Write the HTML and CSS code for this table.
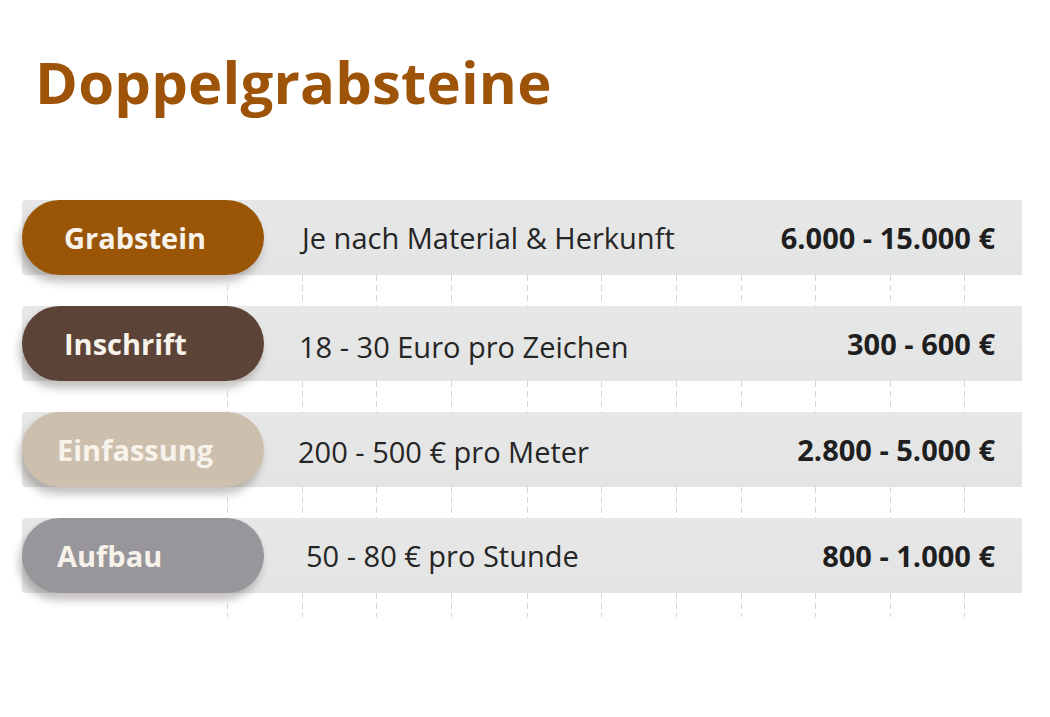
FILE: index.html
```html
<!DOCTYPE html>
<html lang="de">
<head>
<meta charset="utf-8">
<title>Doppelgrabsteine</title>
<link rel="stylesheet" href="styles.css">
</head>
<body>
<main class="page">
  <h1 class="title">Doppelgrabsteine</h1>
  <section class="table">
    <div class="row">
      <div class="pill pill--grabstein">Grabstein</div>
      <div class="desc desc--1">Je nach Material &amp; Herkunft</div>
      <div class="price">6.000 - 15.000 €</div>
    </div>
    <div class="gap"><span></span><i></i><i></i><i></i><i></i><i></i><i></i><i></i><i></i><i></i><i></i><i></i></div>
    <div class="row">
      <div class="pill pill--inschrift">Inschrift</div>
      <div class="desc desc--2">18 - 30 Euro pro Zeichen</div>
      <div class="price">300 - 600 €</div>
    </div>
    <div class="gap"><span></span><i></i><i></i><i></i><i></i><i></i><i></i><i></i><i></i><i></i><i></i><i></i></div>
    <div class="row">
      <div class="pill pill--einfassung">Einfassung</div>
      <div class="desc desc--3">200 - 500 € pro Meter</div>
      <div class="price">2.800 - 5.000 €</div>
    </div>
    <div class="gap"><span></span><i></i><i></i><i></i><i></i><i></i><i></i><i></i><i></i><i></i><i></i><i></i></div>
    <div class="row">
      <div class="pill pill--aufbau">Aufbau</div>
      <div class="desc desc--4">50 - 80 € pro Stunde</div>
      <div class="price">800 - 1.000 €</div>
    </div>
    <div class="gap gap--end"><span></span><i></i><i></i><i></i><i></i><i></i><i></i><i></i><i></i><i></i><i></i><i></i></div>
  </section>
</main>
</body>
</html>
```

FILE: styles.css
```css
* { box-sizing: border-box; }
html, body { margin: 0; padding: 0; background: #ffffff; }
body {
  font-family: "Open Sans", "Liberation Sans", sans-serif;
  width: 1050px;
  height: 717px;
  overflow: hidden;
}
.page {
  padding: 46px 28px 0 22px;
}
.title {
  margin: 0 0 0 13px;
  font-size: 58px;
  line-height: 72px;
  font-weight: 700;
  color: #9d5408;
  letter-spacing: 0.2px;
}
.table {
  margin-top: 82px;
  width: 1000px;
}
.row {
  display: flex;
  align-items: center;
  height: 75px;
  background: linear-gradient(to bottom, #e7e7e7, #e3e4e4);
  border-radius: 4px 0 0 4px;
}
.pill {
  flex: 0 0 242px;
  height: 75px;
  border-radius: 38px;
  display: flex;
  align-items: center;
  font-size: 29px;
  font-weight: 700;
  color: #f7f2ea;
  box-shadow: -3px 7px 8px rgba(40, 30, 20, 0.28);
}
.pill--grabstein { background: #9b5507; padding-left: 42px; }
.pill--inschrift { background: #5b4337; padding-left: 42px; }
.pill--einfassung { background: #cdbfad; padding-left: 35px; }
.pill--aufbau { background: #98969a; padding-left: 35px; }
.desc {
  flex: 1;
  font-size: 29px;
  color: #252525;
  padding-left: 36px;
}
.desc--1 { padding-left: 38px; }
.desc--2 { padding-left: 35px; padding-top: 6px; }
.desc--3 { padding-left: 34px; padding-top: 4px; }
.desc--4 { padding-left: 42px; }
.price {
  font-size: 29px;
  font-weight: 700;
  color: #1f1f1f;
  padding-right: 27px;
  white-space: nowrap;
}
.gap {
  height: 31px;
  display: grid;
  grid-template-columns: 205px 75px 74px 75px 76px 74px 75px 65px 74px 75px 74px 1fr;
}
.gap--end { height: 24px; }
.gap i {
  display: block;
  width: 1px;
  height: 100%;
  background-image: repeating-linear-gradient(to bottom, #d6d6d6 0 6px, transparent 6px 10px);
}
```
